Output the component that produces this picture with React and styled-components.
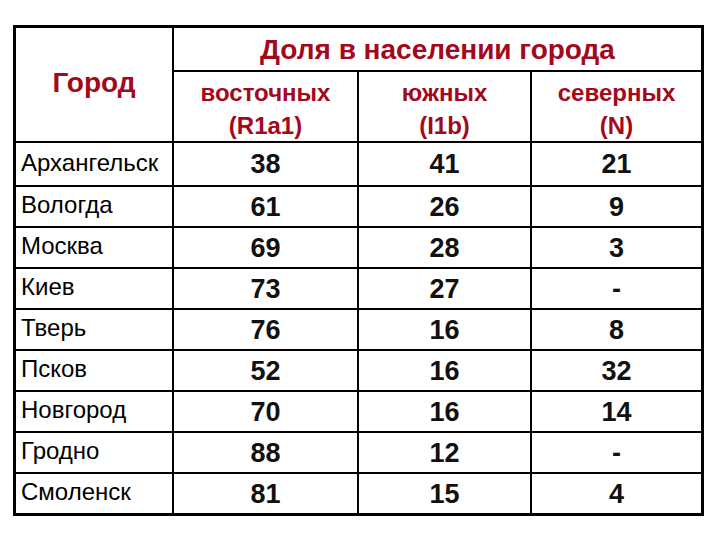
import React from "react";
import styled, { createGlobalStyle } from "styled-components";

const Global = createGlobalStyle`
  html, body { margin: 0; padding: 0; background: #fff; }
  body { font-family: "Liberation Sans", Arial, sans-serif; }
`;

const Page = styled.div`
  width: 720px;
  height: 540px;
  padding: 25px 0 0 13px;
  box-sizing: border-box;
`;

const Grid = styled.div`
  display: grid;
  grid-template-columns: 156px 183px 171px 169px;
  grid-template-rows: 42px 69px 42px repeat(8, 39px);
  gap: 2px;
  width: max-content;
  background: #000;
  border: 3px solid #000;
`;

const Cell = styled.div`
  background: #fff;
  display: flex;
  align-items: center;
  justify-content: center;
  box-sizing: border-box;
`;

const CityHead = styled(Cell)`
  grid-row: 1 / span 2;
  color: #a3081c;
  font-weight: 700;
  font-size: 28px;
  padding-bottom: 4px;
`;

const GroupHead = styled(Cell)`
  grid-column: 2 / span 3;
  color: #a3081c;
  font-weight: 700;
  font-size: 28px;
  padding-top: 2px;
`;

const SubHead = styled(Cell)`
  flex-direction: column;
  color: #a3081c;
  font-weight: 700;
  font-size: 24px;
  line-height: 33px;
  padding-top: 4px;
`;

const CityCell = styled(Cell)`
  justify-content: flex-start;
  padding-left: 5px;
  font-size: 24px;
  color: #000;
  padding-bottom: ${(p) => (p.$first ? "2px" : "3px")};
`;

const ValueCell = styled(Cell)`
  font-size: 27px;
  font-weight: 700;
  color: #111;
  padding-top: ${(p) => (p.$first ? "0" : "2px")};
`;

const rows = [
  ["Архангельск", "38", "41", "21"],
  ["Вологда", "61", "26", "9"],
  ["Москва", "69", "28", "3"],
  ["Киев", "73", "27", "-"],
  ["Тверь", "76", "16", "8"],
  ["Псков", "52", "16", "32"],
  ["Новгород", "70", "16", "14"],
  ["Гродно", "88", "12", "-"],
  ["Смоленск", "81", "15", "4"],
];

const subs = [
  ["восточных", "(R1a1)"],
  ["южных", "(I1b)"],
  ["северных", "(N)"],
];

export default function App() {
  return (
    <>
      <Global />
      <Page>
        <Grid>
          <CityHead>Город</CityHead>
          <GroupHead>Доля в населении города</GroupHead>
          {subs.map(([a, b]) => (
            <SubHead key={a}>
              <span>{a}</span>
              <span>{b}</span>
            </SubHead>
          ))}
          {rows.map(([city, ...vals], i) => (
            <React.Fragment key={city}>
              <CityCell $first={i === 0}>{city}</CityCell>
              {vals.map((v, j) => (
                <ValueCell key={j} $first={i === 0}>
                  {v}
                </ValueCell>
              ))}
            </React.Fragment>
          ))}
        </Grid>
      </Page>
    </>
  );
}
